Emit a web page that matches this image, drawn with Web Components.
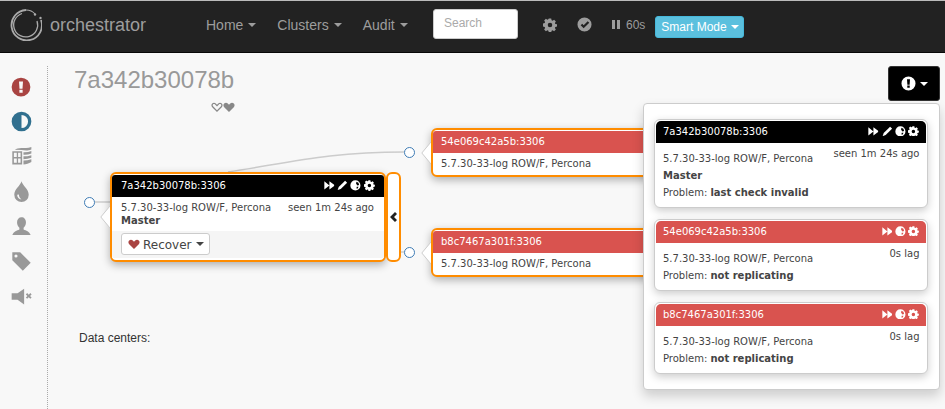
<!DOCTYPE html>
<html>
<head>
<meta charset="utf-8">
<style>
  html, body { margin: 0; height: 100%; overflow: hidden; }
  body { background: #f8f8f8; font-family: "Liberation Sans", Arial, sans-serif; font-size: 14px; color: #333; }
</style>
</head>
<body>
<orc-navbar></orc-navbar>
<orc-page>
  <orc-sidebar slot="side"></orc-sidebar>
  <orc-topology></orc-topology>
  <orc-problems></orc-problems>
</orc-page>

<script>
const ICONS = {
  forward: '<path d="M.5 2 8 8 .5 14ZM8 2 15 7V9L8 14Z"/>',
  pencil: '<path d="M12 1 15 4 5.500 13.500 1 15 2.500 10.500Z"/>',
  globe: '<path fill-rule="evenodd" d="M8 .5a7.500 7.500 0 1 0 0 15 7.500 7.500 0 0 0 0-15ZM9.500 2.500 12.500 4 13.500 7.500 11 8 9 5.500ZM10 10 12.500 10 11.500 12.500 9.500 12.500Z"/>',
  cog: '<path fill-rule="evenodd" d="M6.600.5h2.800l.4 2 1.200.5 1.700-1.100 2 2-1.100 1.700.5 1.200 2 .4v2.600l-2 .4-.5 1.200 1.100 1.700-2 2-1.700-1.100-1.200.5-.4 2H6.600l-.4-2-1.200-.5-1.700 1.100-2-2 1.100-1.700-.5-1.200-2-.4V6.200l2-.4.5-1.200-1.100-1.700 2-2L4.900 2l1.200-.5ZM8 5.400a2.600 2.600 0 1 0 0 5.200 2.600 2.600 0 0 0 0-5.200Z"/>',
  alert: '<path fill-rule="evenodd" d="M8 .5a7.500 7.500 0 1 0 0 15 7.500 7.500 0 0 0 0-15ZM6.400 3.500h3.200l-.4 5.800H6.800ZM6.700 10.200h2.600v2.400H6.700Z"/>',
  check: '<path fill-rule="evenodd" d="M8 .5a7.500 7.500 0 1 0 0 15 7.500 7.500 0 0 0 0-15Zm3.400 3.900 1.700 1.700-6 6-3.200-3.200 1.700-1.700 1.500 1.500Z"/>',
  heart: '<path d="M8 14.500 1.600 8.200C.2 6.800.2 4.600 1.600 3.300c1.400-1.300 3.500-1.200 4.800.1L8 5l1.600-1.600c1.300-1.300 3.400-1.400 4.800-.1 1.400 1.300 1.400 3.500 0 4.900Z"/>',
  heartEmpty: '<path fill-rule="evenodd" d="M8 14.500 1.600 8.200C.2 6.800.2 4.600 1.600 3.300c1.400-1.300 3.500-1.200 4.800.1L8 5l1.600-1.600c1.300-1.300 3.400-1.400 4.800-.1 1.400 1.300 1.400 3.500 0 4.900ZM8 12.400l5.200-5.300c.7-.7.7-2 0-2.700-.8-.7-1.900-.7-2.600.1L8 7.200 5.400 4.500c-.7-.8-1.800-.8-2.600-.1-.7.7-.7 2 0 2.700Z"/>',
  adjust: '<path fill-rule="evenodd" d="M8 .5a7.500 7.500 0 1 0 0 15 7.500 7.500 0 0 0 0-15ZM8 3v10a5 5 0 0 0 0-10Z"/>',
  drop: '<path fill-rule="evenodd" d="M8 .2c.7 3.200 5.500 6 5.500 10.300a5.500 5.500 0 0 1-11 0C2.500 6.200 7.300 3.400 8 .2ZM4.700 10.500c0 2 1.300 3.400 3.300 3.500-1.100-.8-1.900-2-2-3.800Z"/>',
  user: '<path d="M8 1c2 0 3.400 1.600 3.400 3.800 0 1.700-.8 3.300-1.800 4.100v1.300c1.800.8 4.400 1.500 5.400 4.300H1c1-2.800 3.600-3.500 5.400-4.300V8.900C5.400 8.100 4.600 6.500 4.600 4.800 4.600 2.600 6 1 8 1Z"/>',
  tag: '<path fill-rule="evenodd" d="M1 1h6l8 8-6 6-8-8Zm2.800 1.600a1.200 1.200 0 1 0 0 2.400 1.200 1.200 0 0 0 0-2.400Z"/>',
  mute: '<path d="M.5 5.500H5L10 2v12L5 10.500H.5Z"/><path d="M11.300 6.400l1-1 1.200 1.200 1.200-1.200 1 1-1.200 1.200 1.200 1.200-1 1-1.200-1.200-1.200 1.200-1-1 1.200-1.200Z"/>',
  tables: '<path fill-rule="evenodd" d="M1 4h7.500v10H1ZM2.200 5.200v3.100h2.200V5.200Zm3.200 0v3.100h1.900V5.200ZM2.200 9.500v3.200h2.200V9.500Zm3.200 0v3.200h1.900V9.500Z"/><path d="M3 2.900C5 .4 10 2.500 15.500.7v2C12 4 10 3.200 8 3Z"/><path d="M9.500 4.700c2 .2 4-.2 6-.9v2c-2 .8-4 1-6 .9Z"/><path d="M9.500 7.900c2 0 4-.3 6-.9v2c-2 .7-4 1-6 1Z"/><path d="M9.500 11.100c2 0 4-.4 6-1v2c-2 1.100-4 1.700-6 1.900Z"/>'
};

function icon(name, size, color) {
  return `<svg width="${size}" height="${size}" viewBox="0 0 16 16" fill="${color || 'currentColor'}" style="display:block">${ICONS[name]}</svg>`;
}

class OrcNavbar extends HTMLElement {
  constructor() {
    super();
    this.attachShadow({ mode: 'open' }).innerHTML = `
      <style>
        :host { display: flex; align-items: center; height: 51px; background: #222; border-top: 1px solid #bbb; border-bottom: 1px solid #080808; color: #9d9d9d; font-size: 14px; }
        .brand { display: flex; align-items: center; gap: 8px; margin: 0 0 3px 10px; width: 196px; font-size: 18px; }
        .menu { display: flex; gap: 21px; width: 227px; margin-bottom: 3px; }
        .menu span { display: flex; align-items: center; gap: 5px; }
        .caret { width: 0; height: 0; border-top: 4px solid currentColor; border-left: 4px solid transparent; border-right: 4px solid transparent; }
        .search { box-sizing: border-box; width: 85px; height: 30px; margin: 0 25px 5px 0; background: #fff; border: 1px solid #ccc; border-radius: 3px; padding: 5px 10px; font-size: 12px; line-height: 16px; color: #aaa; }
        .tool { margin: 0 20px 4px 0; }
        .timer { display: flex; align-items: center; gap: 6px; font-size: 12px; margin: 0 10px 4px 0; }
        .bars { display: flex; gap: 2px; }
        .bars i { display: block; width: 3px; height: 9px; background: currentColor; }
        .smart { display: flex; align-items: center; gap: 4px; height: 22px; width: 89px; margin-top: 1px; padding: 0 0 0 5px; white-space: nowrap; background: #5bc0de; border: 1px solid #46b8da; border-radius: 3px; color: #fff; font-size: 12px; box-sizing: border-box; }
      </style>
      <div class="brand">
        <svg width="32" height="32" viewBox="0 0 32 32" fill="none" stroke="#aaa">
          <path d="M16 1A15.200 15.200 0 1 0 31 11" stroke-width="1.800"/>
          <path d="M12 4.500A12 12 0 1 0 27 12" stroke-width="1.300"/>
          <path d="M16 1C20 1 23 2.500 25 5" stroke-width="1.200"/>
          <circle cx="25" cy="5.500" r="1.200" fill="#aaa" stroke="none"/>
          <circle cx="30.500" cy="9" r="1.200" fill="#aaa" stroke="none"/>
        </svg>
        <span>orchestrator</span>
      </div>
      <div class="menu">
        <span>Home <i class="caret"></i></span>
        <span>Clusters <i class="caret"></i></span>
        <span>Audit <i class="caret"></i></span>
      </div>
      <div class="search">Search</div>
      <div class="tool">${icon('cog', 14)}</div>
      <div class="tool">${icon('check', 15)}</div>
      <div class="timer"><span class="bars"><i></i><i></i></span>60s</div>
      <div class="smart">Smart Mode <i class="caret"></i></div>
    `;
  }
}
customElements.define('orc-navbar', OrcNavbar);

class OrcPage extends HTMLElement {
  constructor() {
    super();
    this.attachShadow({ mode: 'open' }).innerHTML = `
      <style>
        :host { display: flex; position: relative; height: 356px; }
        main { position: relative; flex: 1; }
      </style>
      <slot name="side"></slot>
      <main><slot></slot></main>
    `;
  }
}
customElements.define('orc-page', OrcPage);

class OrcSidebar extends HTMLElement {
  constructor() {
    super();
    const items = [['alert', '#a94442', 20], ['adjust', '#31708f', 21], ['tables', '#999', 21], ['drop', '#999', 21], ['user', '#999', 21], ['tag', '#999', 21], ['mute', '#999', 21]];
    this.attachShadow({ mode: 'open' }).innerHTML = `
      <style>
        :host { display: block; box-sizing: border-box; width: 48px; height: 343px; margin-top: 13px; border-right: 1px dotted #aaa; padding-top: 3px; }
        div { display: flex; justify-content: center; align-items: center; height: 35px; padding-right: 5px; }
      </style>
      ${items.map(([n, c, s]) => `<div>${icon(n, s, c)}</div>`).join('')}
    `;
  }
}
customElements.define('orc-sidebar', OrcSidebar);

// one instance box on the diagram
class OrcNode extends HTMLElement {
  constructor() {
    super();
    this.attachShadow({ mode: 'open' }).innerHTML = `
      <style>
        :host { display: block; position: absolute; box-sizing: border-box; border: 2px solid #ff8c00; border-radius: 6px; background: #fff; box-shadow: 0 3px 9px rgba(0,0,0,.3); font-family: "DejaVu Sans", sans-serif; font-size: 10px; color: #444; }
        header { display: flex; justify-content: space-between; align-items: center; height: 22px; margin-top: 1px; padding: 0 9.500px 0 var(--pad, 8px); border-radius: 3px 3px 0 0; background: var(--head, #000); color: #fff; }
        header > span:first-child { margin-bottom: 2px; }
        .tools { display: flex; margin-top: -1px; }
        .info { display: flex; justify-content: space-between; box-sizing: border-box; padding: 4px 10px 0 var(--pad, 8px); line-height: 13px; height: 34px; }
        .arrow { position: absolute; left: -12px; top: calc(50% - 12px); display: block; }
      </style>
      <svg class="arrow" width="10" height="24" viewBox="0 0 10 24" fill="#fff" stroke="#ccc"><path d="M10 1 .8 12 10 23"/></svg>
      <header><span>${this.getAttribute('name')}</span><span class="tools"><slot name="tools"></slot></span></header>
      <div class="info"><div>5.7.30-33-log ROW/F, Percona<slot name="role"></slot></div><slot name="seen"></slot></div>
      <slot></slot>
    `;
  }
}
customElements.define('orc-node', OrcNode);

class OrcTools extends HTMLElement {
  constructor() {
    super();
    const names = this.getAttribute('icons').split(' ');
    this.attachShadow({ mode: 'open' }).innerHTML = `
      <style>:host { display: flex; gap: 2.500px; color: #fff; }</style>
      ${names.map(n => icon(n, 10.800)).join('')}
    `;
  }
}
customElements.define('orc-tools', OrcTools);

class OrcTopology extends HTMLElement {
  constructor() {
    super();
    this.attachShadow({ mode: 'open' }).innerHTML = `
      <style>
        :host { display: block; position: absolute; inset: 0; color: #333; }
        h1 { margin: 0; position: absolute; left: 26px; top: 13px; font: 500 24px/28px "Liberation Sans", sans-serif; color: #999; }
        .hearts { position: absolute; left: 163px; top: 48px; display: flex; color: #888; }
        svg.links { position: absolute; left: 0; top: 0; }
        .dot { position: absolute; width: 11px; height: 11px; box-sizing: border-box; border: 1.500px solid #3f7cb5; border-radius: 50%; background: #fff; }
        .collapse { position: absolute; left: 338px; top: 119px; box-sizing: border-box; width: 15px; height: 90px; background: #fff; border: 2px solid #ff8c00; border-radius: 6px; display: flex; align-items: center; justify-content: center; }
        .dc { position: absolute; left: 31px; top: 278px; font-size: 12px; }
        .foot { height: 27px; background: #f5f5f5; padding: 2px 9px; box-sizing: border-box; }
        .btn { display: inline-flex; align-items: center; gap: 3px; height: 22px; padding: 0 5px 0 6px; box-sizing: border-box; background: #fff; border: 1px solid #ccc; border-radius: 3px; font: 12px/20px "DejaVu Sans", sans-serif; color: #444; }
        .btn span { margin-top: 1px; }
        .btn i { margin-left: 1px; }
        .caret { width: 0; height: 0; border-top: 4px solid currentColor; border-left: 4px solid transparent; border-right: 4px solid transparent; }
        b[slot=role] { display: block; }
      </style>
      <h1>7a342b30078b</h1>
      <div class="hearts">${icon('heartEmpty', 12)}${icon('heart', 12)}</div>
      <svg class="links" width="500" height="356" fill="none" stroke="#ccc" stroke-width="1.500">
        <path d="M47 149 H64"/>
        <path d="M180 119 C 240 110, 280 99, 356 99"/>
        <path d="M350 199 H356"/>
      </svg>
      <div class="dot" style="left:36px;top:144px"></div>
      <div class="dot" style="left:356px;top:94px"></div>
      <div class="dot" style="left:356px;top:194px"></div>
      <orc-node name="7a342b30078b:3306" style="left:62px;top:119px;width:276px;height:90px;--pad:9px">
        <orc-tools slot="tools" icons="forward pencil globe cog"></orc-tools>
        <b slot="role">Master</b>
        <span slot="seen">seen 1m 24s ago</span>
        <div class="foot"><span class="btn">${icon('heart', 12, '#a94442')}<span>Recover</span><i class="caret"></i></span></div>
      </orc-node>
      <div class="collapse"><svg width="8" height="10" viewBox="0 0 8 10" fill="#222"><path d="M5 0l2 2-3 3 3 3-2 2-5-5Z"/></svg></div>
      <orc-node name="54e069c42a5b:3306" style="left:383px;top:75px;width:300px;height:49px;--head:#d9534f"></orc-node>
      <orc-node name="b8c7467a301f:3306" style="left:383px;top:175px;width:300px;height:49px;--head:#d9534f"></orc-node>
      <div class="dc">Data centers:</div>
    `;
  }
}
customElements.define('orc-topology', OrcTopology);

class OrcProblem extends HTMLElement {
  constructor() {
    super();
    const tools = this.getAttribute('icons').split(' ').map(n => icon(n, 10.800)).join('');
    const role = this.getAttribute('role-name');
    this.attachShadow({ mode: 'open' }).innerHTML = `
      <style>
        :host { display: block; background: #fff; border: 1px solid #ccc; border-radius: 6px; box-shadow: 0 3px 8px rgba(0,0,0,.2); font-family: "DejaVu Sans", sans-serif; font-size: 10px; color: #444; margin-bottom: 11px; padding: 0 0 6px; }
        :host(:last-child) { margin-bottom: 0; }
        header { display: flex; justify-content: space-between; height: 22px; align-items: center; margin: 1px 1px 0; padding: 0 7px 0 7px; border-radius: 5px 5px 0 0; background: var(--head, #d9534f); color: #fff; }
        header > span:first-child { margin-bottom: 2px; }
        .tools { display: flex; gap: 2.500px; margin-top: -2px; }
        .body { position: relative; padding: 7px 10px 0 8px; line-height: 17px; }
        .seen { position: absolute; right: 7.500px; top: 2px; }
      </style>
      <header><span>${this.getAttribute('name')}</span><span class="tools">${tools}</span></header>
      <div class="body">
        <div>5.7.30-33-log ROW/F, Percona</div>
        <span class="seen">${this.getAttribute('seen')}</span>
        ${role ? `<div><b>${role}</b></div>` : ''}
        <div>Problem: <b>${this.getAttribute('problem')}</b></div>
      </div>
    `;
  }
}
customElements.define('orc-problem', OrcProblem);

class OrcProblems extends HTMLElement {
  constructor() {
    super();
    this.attachShadow({ mode: 'open' }).innerHTML = `
      <style>
        :host { display: block; position: absolute; left: 595px; top: 0; width: 300px; height: 300px; }
        .toggle { position: absolute; left: 245px; top: 13px; box-sizing: border-box; width: 52px; height: 35px; background: #000; border: 1px solid #333; border-radius: 3px; color: #fff; display: flex; align-items: center; justify-content: center; gap: 4px; }
        .caret { width: 0; height: 0; border-top: 4px solid currentColor; border-left: 4px solid transparent; border-right: 4px solid transparent; }
        .panel { position: absolute; left: 0; top: 50px; box-sizing: border-box; width: 297px; height: 287px; padding: 15px 11px 0 10px; background: #fff; border: 1px solid #ccc; border-radius: 4px; box-shadow: 0 6px 12px rgba(0,0,0,.175); }
      </style>
      <div class="toggle">${icon('alert', 15)}<i class="caret"></i></div>
      <div class="panel">
        <orc-problem style="--head:#000" name="7a342b30078b:3306" icons="forward pencil globe cog" seen="seen 1m 24s ago" role-name="Master" problem="last check invalid"></orc-problem>
        <orc-problem name="54e069c42a5b:3306" icons="forward globe cog" seen="0s lag" problem="not replicating"></orc-problem>
        <orc-problem name="b8c7467a301f:3306" icons="forward globe cog" seen="0s lag" problem="not replicating"></orc-problem>
      </div>
    `;
  }
}
customElements.define('orc-problems', OrcProblems);
</script>
</body>
</html>
